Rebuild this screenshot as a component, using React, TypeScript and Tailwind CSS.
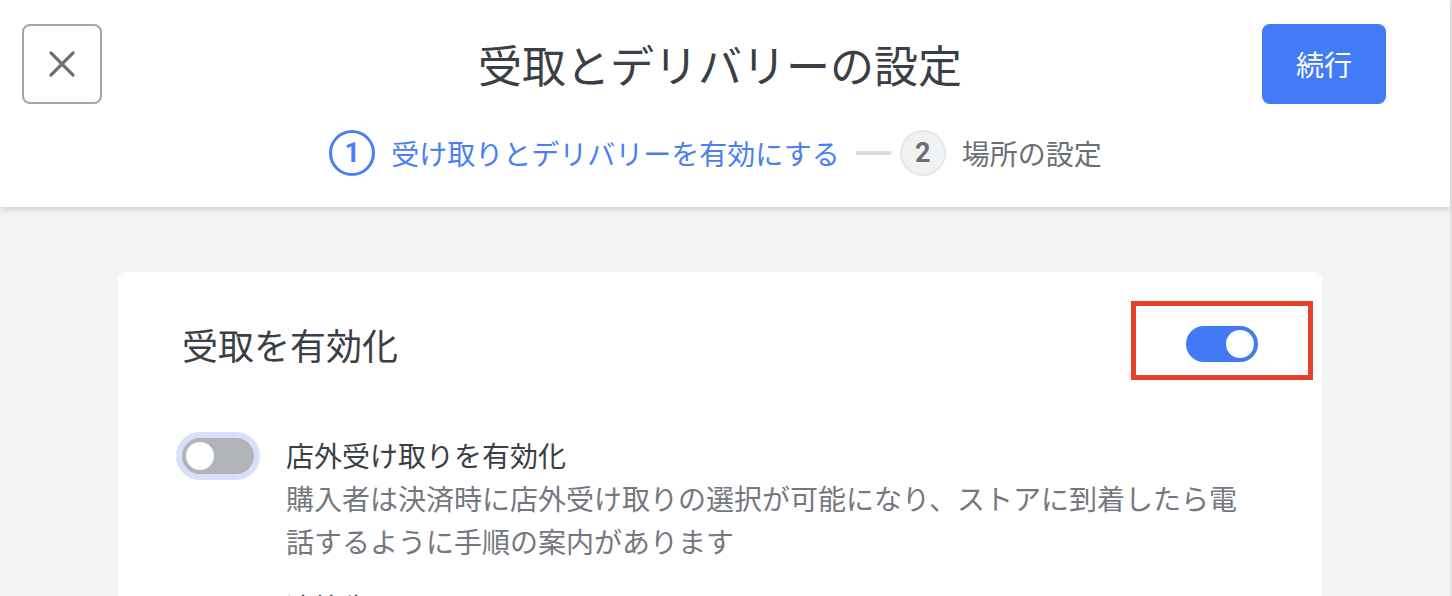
import React from "react";

const font = { fontFamily: '"Noto Sans CJK JP", "Noto Sans", sans-serif' };

const Toggle: React.FC<{ on?: boolean; focused?: boolean }> = ({ on, focused }) => (
	<div
		className={`flex h-[36px] w-[72px] shrink-0 items-center rounded-full p-[4px] ${
			on ? "justify-end bg-[#4279f4]" : "justify-start bg-[#b1b4b8]"
		} ${focused ? "ring-[6px] ring-[#d7e1fc]" : ""}`}
	>
		<div className="h-[28px] w-[28px] rounded-full bg-white" />
	</div>
);

const StepCircle: React.FC<{ n: number; active?: boolean }> = ({ n, active }) => (
	<div
		className={`flex h-[46px] w-[46px] shrink-0 items-center justify-center rounded-full font-['Roboto'] text-[27px] font-bold ${
			active
				? "border-[3px] border-[#4a7ff2] bg-white text-[#4a7ff2]"
				: "border-2 border-[#e6e7e9] bg-[#f1f2f4] text-[#6b6f75]"
		}`}
	>
		{n}
	</div>
);

export default function App() {
	return (
		<div className="flex h-[596px] w-full overflow-hidden" style={font}>
			<div className="flex min-w-0 flex-1 flex-col bg-[#f3f4f6]">
				{/* header */}
				<header className="relative z-10 shrink-0 bg-white pt-[24px] pb-[31px] shadow-[0_3px_6px_rgba(0,0,0,0.14)]">
					<div className="grid grid-cols-[1fr_auto_1fr] items-center">
						<div className="pl-[22px]">
							<button className="flex h-[80px] w-[80px] items-center justify-center rounded-lg border-2 border-[#a2a5a9] bg-white text-[#6a6e73]">
								<svg width="28" height="28" viewBox="0 0 24 24" fill="none" stroke="currentColor" strokeWidth="2.7" strokeLinecap="round">
									<path d="M2.5 2.5l19 19M21.5 2.5l-19 19" />
								</svg>
							</button>
						</div>
						<h1 className="pr-[10px] text-[44px] leading-[60px] text-[#3a3f45]">受取とデリバリーの設定</h1>
						<div className="flex justify-end pr-[64px]">
							<button className="flex h-[80px] w-[124px] items-center justify-center rounded-lg bg-[#437af5] text-[28px] text-white">
								続行
							</button>
						</div>
					</div>
					<div className="mt-[26px] flex items-center justify-center pr-[19px]">
						<StepCircle n={1} active />
						<span className="ml-[16px] text-[28px] leading-[46px] text-[#4a7ff2]">受け取りとデリバリーを有効にする</span>
						<div className="ml-[16px] mr-[9px] h-[4px] w-[35px] bg-[#d9dbde]" />
						<StepCircle n={2} />
						<span className="ml-[16px] text-[28px] leading-[46px] text-[#6b6f75]">場所の設定</span>
					</div>
				</header>

				{/* body */}
				<main className="flex-1 pl-[118px] pt-[65px]">
					<div className="w-[1204px] rounded-lg bg-white px-[64px] pt-[48px] pb-[40px]">
						<div className="flex h-[48px] items-center justify-between">
							<h2 className="text-[36px] leading-[48px] text-[#3a3f45]">受取を有効化</h2>
							<div className="relative">
								<Toggle on />
								<div className="absolute left-[-55px] top-[-25px] h-[79px] w-[182px] border-[5px] border-[#e6412b]" />
							</div>
						</div>

						<div className="mt-[66px] flex items-start gap-[32px]">
							<div className="pt-[4px]">
								<Toggle focused />
							</div>
							<div className="flex flex-col">
								<div className="text-[28px] leading-[43px] text-[#3a3f45]">店外受け取りを有効化</div>
								<p className="text-[28px] leading-[43px] text-[#74787e]">
									購入者は決済時に店外受け取りの選択が可能になり、ストアに到着したら電話するように手順の案内があります
								</p>
								<div className="mt-[23px] flex items-center gap-[40px] text-[28px] leading-[43px]">
									<span className="text-[#3a3f45]">連絡先</span>
									<span className="text-[#9a9ea4]">000-000-000</span>
								</div>
							</div>
						</div>
					</div>
				</main>
			</div>
			<div className="w-[2px] shrink-0 bg-[#e4e4e4]" />
		</div>
	);
}
